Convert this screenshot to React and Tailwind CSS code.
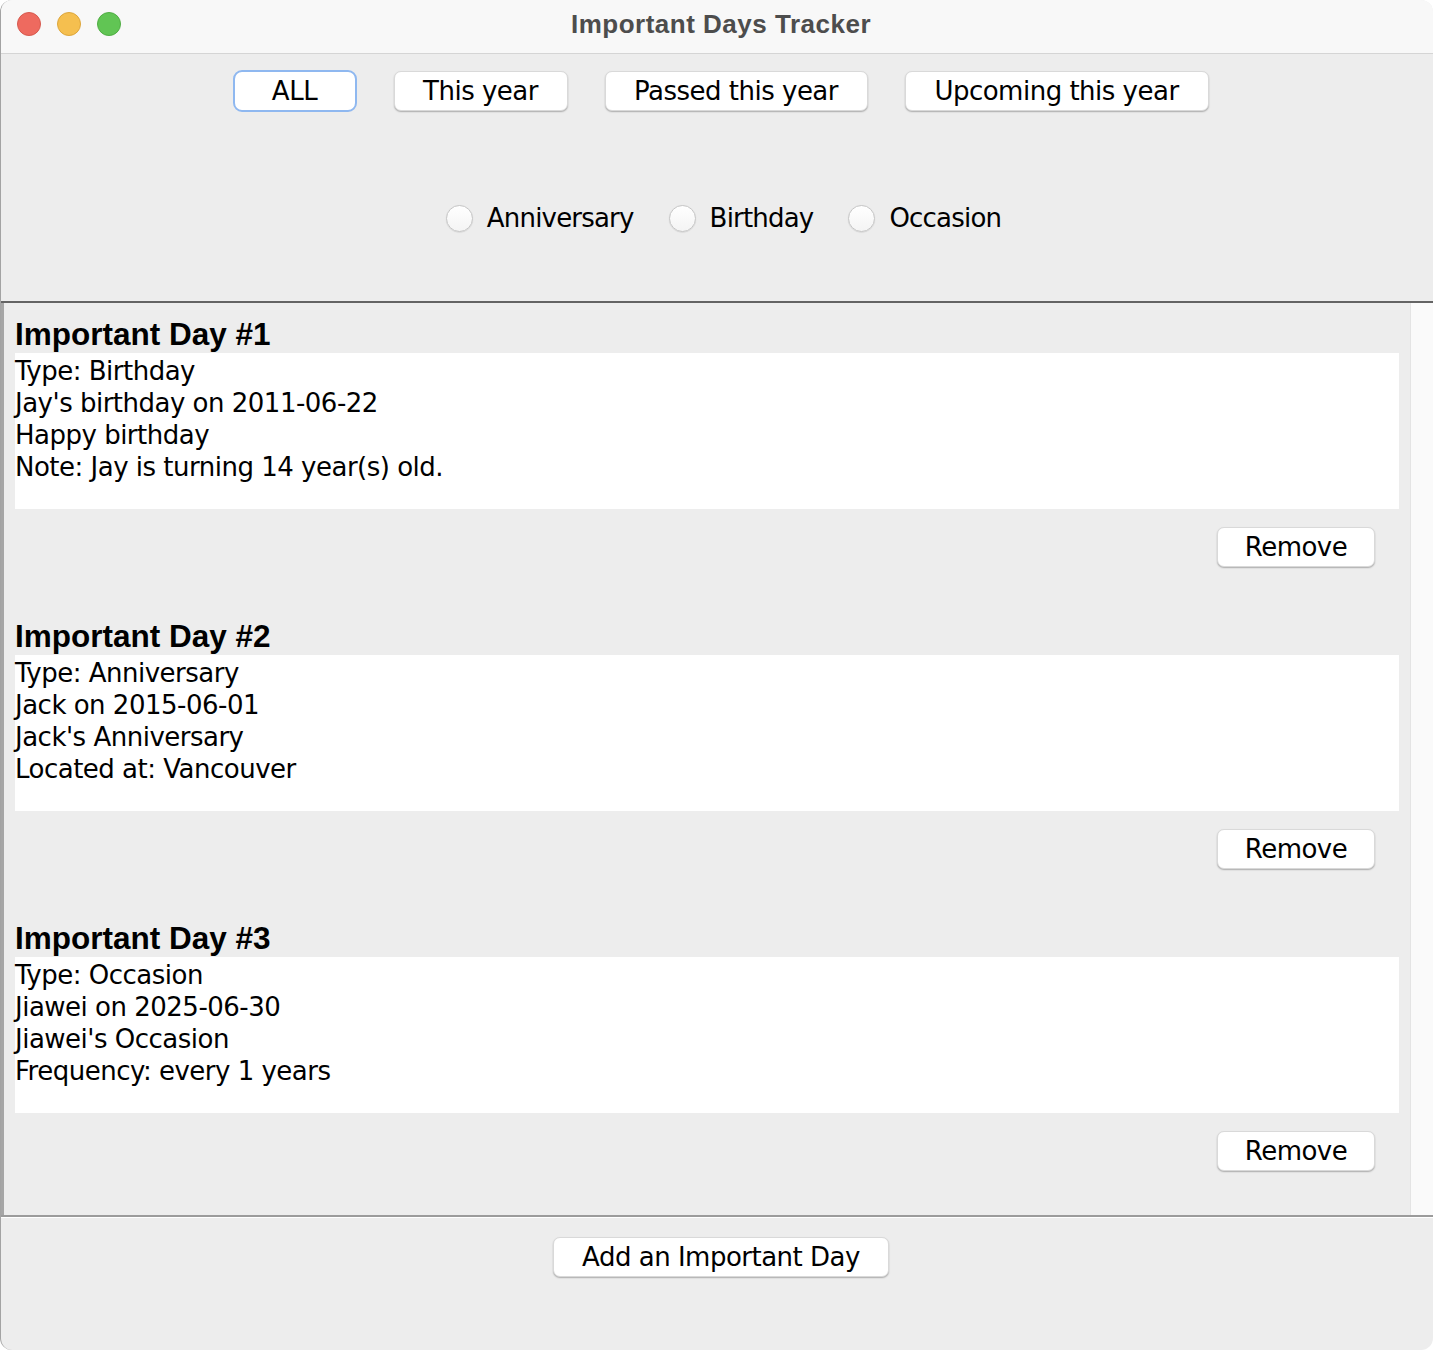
import React, { useState } from 'react';

const days = [
    {
        id: 1,
        lines: ["Type: Birthday", "Jay's birthday on 2011-06-22", "Happy birthday", "Note: Jay is turning 14 year(s) old."]
    },
    {
        id: 2,
        lines: ["Type: Anniversary", "Jack on 2015-06-01", "Jack's Anniversary", "Located at: Vancouver"]
    },
    {
        id: 3,
        lines: ["Type: Occasion", "Jiawei on 2025-06-30", "Jiawei's Occasion", "Frequency: every 1 years"]
    }
];

const filters = [
    { label: "ALL", w: "w-[174px]" },
    { label: "This year", w: "w-[174px]" },
    { label: "Passed this year", w: "w-[263px]" },
    { label: "Upcoming this year", w: "w-[304px]" }
];

const body = { fontFamily: '"DejaVu Sans", "Liberation Sans", sans-serif' };
const sans = { fontFamily: '"Liberation Sans", Arial, sans-serif' };

function MacButton({ children, className = "", onClick }) {
    return (
        <button
            onClick={onClick}
            className={"h-[40px] bg-white rounded-[7px] border border-[#d9d9d9] shadow-[0_1px_1.5px_rgba(0,0,0,0.28)] text-[26px] tracking-[-0.5px] text-black leading-none " + className}
        >
            {children}
        </button>
    );
}

function App() {
    const [filter, setFilter] = useState("ALL");
    const [type, setType] = useState(null);
    const [items, setItems] = useState(days);

    return (
        <div className="w-[1433px] h-[1350px] bg-[#ededed] rounded-[12px] overflow-hidden border-l border-[#a3a3a3] flex flex-col" style={body}>
            {/* title bar */}
            <div className="h-[54px] shrink-0 bg-[#f8f8f8] border-b border-[#d5d5d5] grid grid-cols-[1fr_auto_1fr] items-center pb-[5px]">
                <div className="flex items-center gap-[16px] pl-[16px]">
                    <span className="w-[24px] h-[24px] rounded-full bg-[#ee6a5f] border border-[#d65a4f]" />
                    <span className="w-[24px] h-[24px] rounded-full bg-[#f5bf4f] border border-[#dca63c]" />
                    <span className="w-[24px] h-[24px] rounded-full bg-[#61c554] border border-[#50ad44]" />
                </div>
                <div className="pl-[8px] text-[26px] font-bold tracking-[0.5px] text-[#4d4d4d]" style={sans}>
                    Important Days Tracker
                </div>
                <div />
            </div>

            {/* filters */}
            <div className="h-[247px] shrink-0 pt-[16px]">
                <div className="flex justify-center items-center gap-[37px] pl-[7px] h-[42px]">
                    {filters.map(f =>
                        f.label === filter ? (
                            <button
                                key={f.label}
                                onClick={() => setFilter(f.label)}
                                className="w-[124px] h-[42px] bg-white rounded-[9px] border-[2.5px] border-[#8fb8f0] text-[26px] tracking-[-0.5px] text-black leading-none"
                            >
                                {f.label}
                            </button>
                        ) : (
                            <MacButton key={f.label} className={f.w} onClick={() => setFilter(f.label)}>
                                {f.label}
                            </MacButton>
                        )
                    )}
                </div>
                <div className="mt-[90px] h-[32px] flex justify-center items-center pl-[13px]">
                    {["Anniversary", "Birthday", "Occasion"].map((t, i) => (
                        <label key={t} className={"flex items-center gap-[14px] cursor-pointer " + (i > 0 ? "ml-[35px]" : "")} onClick={() => setType(t)}>
                            <span className="w-[27px] h-[27px] rounded-full bg-gradient-to-b from-white to-[#f4f4f4] border border-[#c6c6c6] shadow-[0_0.5px_1px_rgba(0,0,0,0.14)] flex items-center justify-center">
                                {type === t && <span className="w-[11px] h-[11px] rounded-full bg-[#2f7cf6]" />}
                            </span>
                            <span className="text-[26px] tracking-[-0.8px] text-black">{t}</span>
                        </label>
                    ))}
                </div>
            </div>

            <div className="h-[2px] shrink-0 bg-[#646464]" />

            {/* list */}
            <div className="h-[914px] shrink-0 flex border-b-2 border-[#9b9b9b]">
                <div className="flex-1 border-l-[3px] border-[#a6a6a6] pl-[11px] pr-[11px] overflow-hidden">
                    {items.map((d, idx) => (
                        <div key={d.id} className="h-[302px]">
                            <div className="h-[50px] pt-[13px] text-[31.5px] leading-[36px] font-bold text-black" style={sans}>
                                Important Day #{idx + 1}
                            </div>
                            <div className="h-[156px] pt-[2px] bg-white text-[26px] leading-[32px] tracking-[-0.5px] text-black">
                                {d.lines.map(l => (
                                    <div key={l}>{l}</div>
                                ))}
                            </div>
                            <div className="flex justify-end mt-[18px] pr-[24px]">
                                <MacButton className="w-[158px]" onClick={() => setItems(items.filter(x => x.id !== d.id))}>
                                    Remove
                                </MacButton>
                            </div>
                        </div>
                    ))}
                </div>
                <div className="w-[23px] shrink-0 bg-[#fafafa] border-l border-[#e4e4e4]" />
            </div>
            <div className="h-px shrink-0 bg-white" />

            {/* bottom */}
            <div className="flex-1 flex justify-center pt-[19px] pl-[8px]">
                <MacButton className="w-[336px]">Add an Important Day</MacButton>
            </div>
        </div>
    );
}

export default App;
